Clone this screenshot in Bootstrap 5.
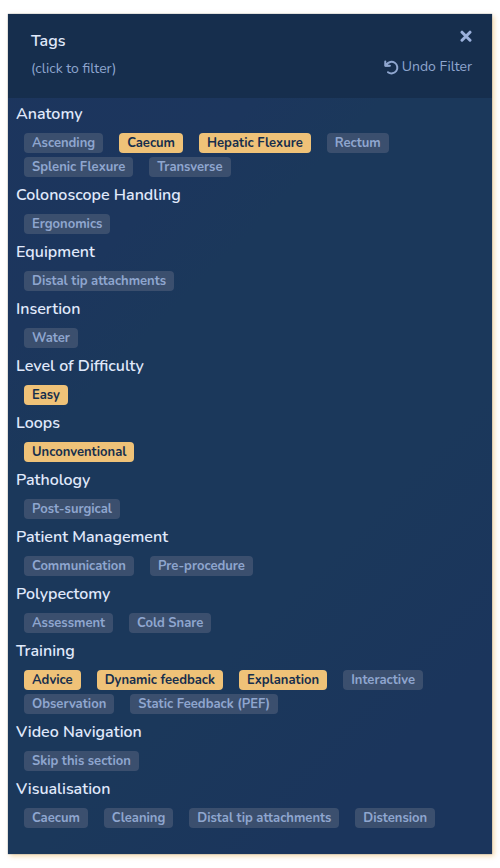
<!DOCTYPE html>
<html lang="en">
<head>
<meta charset="utf-8">
<meta name="viewport" content="width=device-width, initial-scale=1">
<title>Tags</title>
<link href="https://cdn.jsdelivr.net/npm/bootstrap@5.3.0/dist/css/bootstrap.min.css" rel="stylesheet">
<style>
body { font-family: Nunito, Lato, "Open Sans", sans-serif; background: #fff; }
.tag-panel {
  margin: 14px 8px;
  padding-bottom: 24px;
  color: #e0e9fb;
  background: linear-gradient(135deg, #1c355e 0%, #1c365d 25%, #1b385b 35%, #1b385b 65%, #1b355c 85%);
  box-shadow: 0 0 1px #5a6b85, 2px 2px 5px rgba(238, 194, 120, .65);
}
.panel-head { min-height: 84px; padding: 15px 20px 0 23px; background: #162e4d; }
.panel-title { font-size: 16px; line-height: 24px; font-weight: 600; }
.panel-hint { font-size: 14px; line-height: 20px; margin-top: 6px; color: #8fa6cf; }
.head-btn { color: #9bb1dc; font-size: 14px; line-height: 20px; }
.head-btn svg { display: block; }
.undo-btn { margin-top: 13px; gap: 3px; color: #8fa6cf; }
.group-title { font-size: 16px; line-height: 32px; font-weight: 600; padding-left: 8px; }
.tag-list { padding: 3px 16px 2px; gap: 4px 16px; }
.tag-btn {
  font-size: 13px; line-height: 20px; font-weight: 700; padding: 0 8px;
  border-radius: 4px; color: #8fa6cf; background: #3b4f6e;
}
.tag-btn[aria-pressed="true"] { color: #162e4d; background: #efc278; }
</style>
<script src="https://cdn.jsdelivr.net/npm/bootstrap@5.3.0/dist/js/bootstrap.bundle.min.js" defer></script>
</head>
<body>
<main class="tag-panel">
  <header class="panel-head d-flex justify-content-between">
    <div>
      <h1 class="panel-title mb-0">Tags</h1>
      <p class="panel-hint mb-0">(click to filter)</p>
    </div>
    <div class="d-flex flex-column align-items-end">
      <button type="button" class="head-btn border-0 bg-transparent p-0" aria-label="Close">
        <svg width="12" height="15" viewBox="0 0 12 15" fill="none" stroke="currentColor" stroke-width="3" stroke-linecap="round"><path d="M2 3.2l8 8M10 3.2l-8 8"/></svg>
      </button>
      <button type="button" class="head-btn undo-btn border-0 bg-transparent p-0 d-flex align-items-center">
        <svg width="15" height="15" viewBox="0 0 15 15" fill="none" stroke="currentColor" stroke-width="2" stroke-linecap="round" stroke-linejoin="round"><path d="M1.3 1.4v4.4h4.6"/><path d="M1.3 5.8V2.6L5 5.8z" fill="currentColor" stroke-width="1"/><path d="M2.6 4.6A5.8 5.8 0 1 1 4 12.2"/></svg>
        <span>Undo Filter</span>
      </button>
    </div>
  </header>

  <section><h2 class="group-title mb-0">Anatomy</h2>
    <div class="tag-list d-flex flex-wrap">
      <button type="button" class="tag-btn border-0" aria-pressed="false">Ascending</button>
      <button type="button" class="tag-btn border-0" aria-pressed="true">Caecum</button>
      <button type="button" class="tag-btn border-0" aria-pressed="true">Hepatic Flexure</button>
      <button type="button" class="tag-btn border-0" aria-pressed="false">Rectum</button>
      <button type="button" class="tag-btn border-0" aria-pressed="false">Splenic Flexure</button>
      <button type="button" class="tag-btn border-0" aria-pressed="false">Transverse</button>
    </div></section>
  <section><h2 class="group-title mb-0">Colonoscope Handling</h2>
    <div class="tag-list d-flex flex-wrap">
      <button type="button" class="tag-btn border-0" aria-pressed="false">Ergonomics</button>
    </div></section>
  <section><h2 class="group-title mb-0">Equipment</h2>
    <div class="tag-list d-flex flex-wrap">
      <button type="button" class="tag-btn border-0" aria-pressed="false">Distal tip attachments</button>
    </div></section>
  <section><h2 class="group-title mb-0">Insertion</h2>
    <div class="tag-list d-flex flex-wrap">
      <button type="button" class="tag-btn border-0" aria-pressed="false">Water</button>
    </div></section>
  <section><h2 class="group-title mb-0">Level of Difficulty</h2>
    <div class="tag-list d-flex flex-wrap">
      <button type="button" class="tag-btn border-0" aria-pressed="true">Easy</button>
    </div></section>
  <section><h2 class="group-title mb-0">Loops</h2>
    <div class="tag-list d-flex flex-wrap">
      <button type="button" class="tag-btn border-0" aria-pressed="true">Unconventional</button>
    </div></section>
  <section><h2 class="group-title mb-0">Pathology</h2>
    <div class="tag-list d-flex flex-wrap">
      <button type="button" class="tag-btn border-0" aria-pressed="false">Post-surgical</button>
    </div></section>
  <section><h2 class="group-title mb-0">Patient Management</h2>
    <div class="tag-list d-flex flex-wrap">
      <button type="button" class="tag-btn border-0" aria-pressed="false">Communication</button>
      <button type="button" class="tag-btn border-0" aria-pressed="false">Pre-procedure</button>
    </div></section>
  <section><h2 class="group-title mb-0">Polypectomy</h2>
    <div class="tag-list d-flex flex-wrap">
      <button type="button" class="tag-btn border-0" aria-pressed="false">Assessment</button>
      <button type="button" class="tag-btn border-0" aria-pressed="false">Cold Snare</button>
    </div></section>
  <section><h2 class="group-title mb-0">Training</h2>
    <div class="tag-list d-flex flex-wrap">
      <button type="button" class="tag-btn border-0" aria-pressed="true">Advice</button>
      <button type="button" class="tag-btn border-0" aria-pressed="true">Dynamic feedback</button>
      <button type="button" class="tag-btn border-0" aria-pressed="true">Explanation</button>
      <button type="button" class="tag-btn border-0" aria-pressed="false">Interactive</button>
      <button type="button" class="tag-btn border-0" aria-pressed="false">Observation</button>
      <button type="button" class="tag-btn border-0" aria-pressed="false">Static Feedback (PEF)</button>
    </div></section>
  <section><h2 class="group-title mb-0">Video Navigation</h2>
    <div class="tag-list d-flex flex-wrap">
      <button type="button" class="tag-btn border-0" aria-pressed="false">Skip this section</button>
    </div></section>
  <section><h2 class="group-title mb-0">Visualisation</h2>
    <div class="tag-list d-flex flex-wrap">
      <button type="button" class="tag-btn border-0" aria-pressed="false">Caecum</button>
      <button type="button" class="tag-btn border-0" aria-pressed="false">Cleaning</button>
      <button type="button" class="tag-btn border-0" aria-pressed="false">Distal tip attachments</button>
      <button type="button" class="tag-btn border-0" aria-pressed="false">Distension</button>
    </div></section>
</main>
</body>
</html>
